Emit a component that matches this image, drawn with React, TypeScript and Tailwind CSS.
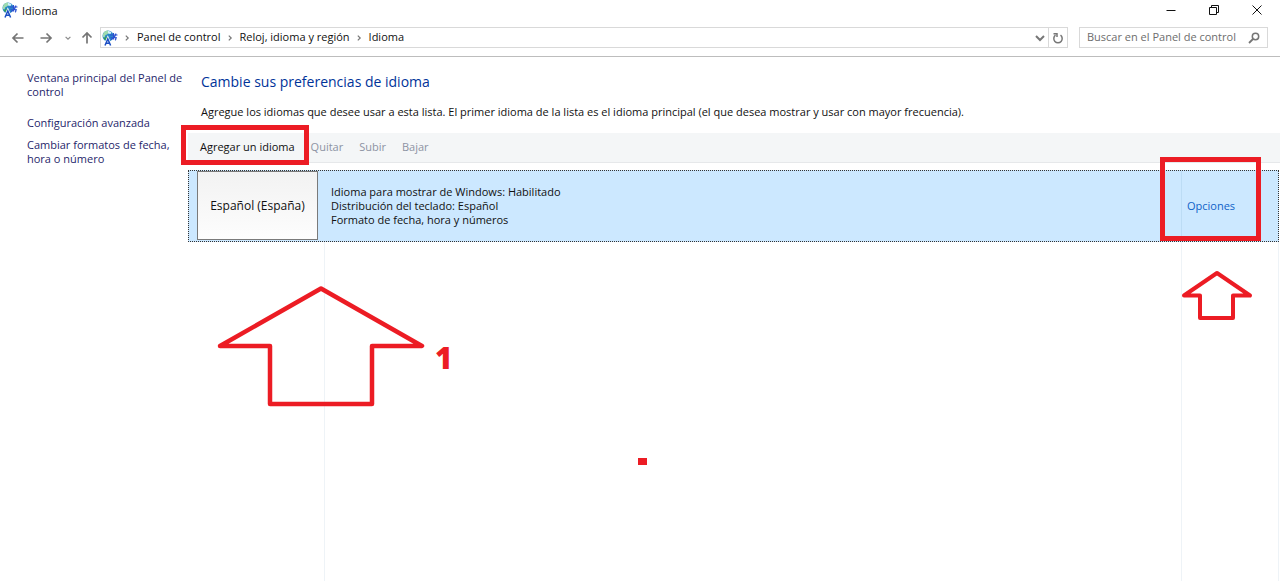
import type { ReactNode } from 'react'

const crumbs = ['Panel de control', 'Reloj, idioma y región', 'Idioma']

const details = [
  'Idioma para mostrar de Windows: Habilitado',
  'Distribución del teclado: Español',
  'Formato de fecha, hora y números',
]

function LanguageIcon() {
  return (
    <svg className="h-4 w-4 shrink-0" viewBox="0 0 16 16" fill="none">
      <circle cx="6" cy="6" r="5.5" fill="#2a86c8" />
      <path d="M.8 5C1.500 2 3.500.6 6 .6L7 2.500 5 4.500 3.500 5 2.500 7.500 1 7Z" fill="#9fdcb0" />
      <path d="M6 .8 9.500 2 8.500 4 6 3.500Z" fill="#d5f2fa" />
      <path d="M1.500 8.500 4.500 6.500 5.500 8.500 3.500 10Z" fill="#2f9e58" />
      <path d="M3 15.500 5.800 9 8.600 15.500" stroke="#fff" strokeWidth="3" />
      <path d="M3 15.500 5.800 9 8.600 15.500M4 13.300H7.600" stroke="#1c4fc4" strokeWidth="1.500" />
      <path
        d="M8 5H15.500M8.500 7.800H15M11.500 3V9.500M14 3.500C13 7 11 9 9 9.500M12.500 7C14 8 14.500 9 13 10.200"
        stroke="#2a50d0"
        strokeWidth="1.100"
      />
    </svg>
  )
}

function Chevron({ className }: { className: string }) {
  return (
    <svg className={className} viewBox="0 0 10 10" fill="none">
      <path d="M1 3 5 7 9 3" stroke="currentColor" strokeWidth="2" />
    </svg>
  )
}

interface INavButton {
  label: string
  className: string
  children: ReactNode
}

function NavButton({ label, className, children }: INavButton) {
  return (
    <button aria-label={label} className={`flex items-center justify-center ${className}`}>
      {children}
    </button>
  )
}

function Arrow({ className }: { className: string }) {
  return (
    <svg className={className} viewBox="0 0 14 12" fill="none">
      <path d="M12.500 6H2M6.500 1.500 2 6 6.500 10.500" stroke="#757575" strokeWidth="1.700" />
    </svg>
  )
}

function TitleBar() {
  return (
    <div className="flex h-6 items-start pt-0.5 pr-0.5 pl-0.5">
      <LanguageIcon />
      <h1 className="ml-1 flex-1 text-[11px] leading-[18px]">Idioma</h1>
      <NavButton label="Minimizar" className="h-4 w-[43px]">
        <svg className="h-3 w-3" viewBox="0 0 12 12">
          <path d="M1.500 6.500H10.500" stroke="#111" />
        </svg>
      </NavButton>
      <NavButton label="Restaurar" className="h-4 w-[43px]">
        <svg className="h-3 w-3" viewBox="0 0 12 12" fill="none" stroke="#111">
          <path d="M1.500 3.500H8.500V10.500H1.500ZM3.500 3.500V1.500H10.500V8.500H8.500" />
        </svg>
      </NavButton>
      <NavButton label="Cerrar" className="h-4 w-[43px]">
        <svg className="h-3 w-3" viewBox="0 0 12 12" fill="none" stroke="#111">
          <path d="M1.500 1.500 10.500 10.500M10.500 1.500 1.500 10.500" />
        </svg>
      </NavButton>
    </div>
  )
}

function AddressBar() {
  return (
    <div className="flex items-center border-b border-[#bdbdbd] pt-[3px] pr-3 pb-2 pl-2">
      <NavButton label="Atrás" className="h-5 w-5">
        <Arrow className="h-3 w-3.5" />
      </NavButton>
      <NavButton label="Adelante" className="ml-2 h-5 w-5">
        <Arrow className="h-3 w-3.5 rotate-180" />
      </NavButton>
      <NavButton label="Ubicaciones recientes" className="ml-1 h-5 w-4 text-[#8a8a8a]">
        <Chevron className="h-1.5 w-1.5" />
      </NavButton>
      <NavButton label="Subir un nivel" className="mr-1 ml-0.5 h-5 w-[18px]">
        <Arrow className="h-3 w-3.5 rotate-90" />
      </NavButton>
      <nav className="flex h-[21px] flex-1 items-center border border-[#d9d9d9] pl-px">
        <LanguageIcon />
        {crumbs.map((crumb) => (
          <div key={crumb} className="flex items-center">
            <Chevron className="mr-[7px] ml-1.5 h-1.5 w-1.5 -rotate-90 text-[#777]" />
            <a href="#" className="text-[11px]">
              {crumb}
            </a>
          </div>
        ))}
        <NavButton label="Ubicaciones anteriores" className="ml-auto h-full w-4 text-[#777]">
          <Chevron className="h-2.5 w-2.5" />
        </NavButton>
        <NavButton label="Actualizar" className="h-full w-[19px] border-l border-[#d9d9d9]">
          <svg className="h-3 w-3" viewBox="0 0 12 12" fill="none" stroke="#777" strokeWidth="1.500">
            <path d="M3.500 3.200A4.200 4.200 0 1 0 8.500 3.200M1.500 1.700H5V5" />
          </svg>
        </NavButton>
      </nav>
      <label className="ml-[11px] flex h-[21px] w-[189px] items-center border border-[#d9d9d9] px-[7px]">
        <input
          aria-label="Buscar en el Panel de control"
          placeholder="Buscar en el Panel de control"
          className="min-w-0 flex-1 text-[11px] outline-none placeholder:text-[#6d6d6d]"
        />
        <svg className="h-3 w-3" viewBox="0 0 12 12" fill="none" stroke="#757575">
          <circle cx="7.500" cy="4.500" r="3.200" strokeWidth="1.500" />
          <path d="M5 7 1 11" strokeWidth="1.800" />
        </svg>
      </label>
    </div>
  )
}

function Sidebar() {
  return (
    <aside className="flex w-[188px] shrink-0 flex-col gap-2 pt-[14px] pl-[27px] text-[11px] leading-[14px] text-[#1f1f6b]">
      <a href="#" className="mb-[9px]">
        Ventana principal del Panel de control
      </a>
      <a href="#">Configuración avanzada</a>
      <a href="#">Cambiar formatos de fecha, hora o número</a>
    </aside>
  )
}

function Toolbar() {
  return (
    <div className="mt-3 flex h-[30px] items-center gap-4 border-b border-[#e6e8ea] bg-[#f4f6f7] pl-3 text-[11px]">
      <div className="relative">
        <button>Agregar un idioma</button>
        <span className="absolute -top-[14px] -right-[14px] -bottom-[9px] -left-[19px] border-[5px] border-[#ec1c24]" />
      </div>
      <button disabled className="text-[#8d93a3]">
        Quitar
      </button>
      <button disabled className="text-[#8d93a3]">
        Subir
      </button>
      <button disabled className="text-[#8d93a3]">
        Bajar
      </button>
    </div>
  )
}

function LanguageRow() {
  return (
    <div className="flex h-[72px] border border-dotted border-[#333] bg-[#cce8ff]">
      <div className="w-[135px] pl-2">
        <button className="h-[69px] w-[121px] border border-[#7a7a7a] bg-linear-to-b from-[#f2f2f2] to-[#fdfdfd] text-[12px] whitespace-nowrap">
          Español (España)
        </button>
      </div>
      <ul className="flex-1 self-center border-l border-transparent pl-1.5 text-[11px] leading-[14px]">
        {details.map((line) => (
          <li key={line}>{line}</li>
        ))}
      </ul>
      <div className="relative flex w-[97px] items-center border-l border-[#bcdcf5] pl-[5px]">
        <a href="#" className="text-[11px] text-[#0f62c8]">
          Opciones
        </a>
        <span className="absolute -top-[14px] right-[17px] bottom-0 -left-[22px] border-[5px] border-[#ec1c24]" />
      </div>
    </div>
  )
}

function EmptyList() {
  return (
    <div className="relative flex flex-1">
      <div className="w-[136px]" />
      <div className="flex-1 border-l border-[#eef3f7]" />
      <div className="w-[98px] border-x border-[#eef3f7]" />

      <svg
        className="absolute top-[42px] left-[28px] h-[124px] w-[210px]"
        viewBox="0 0 210 124"
        fill="none"
      >
        <path
          d="M105 4.500 206 62H156V120H54V62H4Z"
          stroke="#ec1c24"
          strokeWidth="4.500"
          strokeLinejoin="round"
        />
      </svg>
      <span className="absolute top-[100px] left-[247px] text-[30px] leading-8 font-extrabold text-[#ec1c24]">
        1
      </span>
      <span className="absolute top-[216px] left-[450px] h-[7px] w-[9px] bg-[#ec1c24]" />
      <svg
        className="absolute top-[27px] right-[26px] h-[52px] w-[72px]"
        viewBox="0 0 72 52"
        fill="none"
      >
        <path
          d="M36 4 69 26.500H52V49H19V26.500H3Z"
          stroke="#ec1c24"
          strokeWidth="4"
          strokeLinejoin="round"
        />
      </svg>
    </div>
  )
}

export default function App() {
  return (
    <div className="flex min-h-screen flex-col bg-white font-['Open_Sans','Noto_Sans',sans-serif] text-[#111]">
      <header>
        <TitleBar />
        <AddressBar />
      </header>
      <div className="flex flex-1">
        <Sidebar />
        <main className="flex min-w-0 flex-1 flex-col pt-3">
          <h2 className="pl-[13px] text-[14px] leading-[26px] text-[#003399]">
            Cambie sus preferencias de idioma
          </h2>
          <p className="mt-2 pl-[13px] text-[11px] leading-[18px]">
            Agregue los idiomas que desee usar a esta lista. El primer idioma de la lista es el
            idioma principal (el que desea mostrar y usar con mayor frecuencia).
          </p>
          <Toolbar />
          <div className="mt-[7px] flex flex-1 flex-col pr-px">
            <LanguageRow />
            <EmptyList />
          </div>
        </main>
      </div>
    </div>
  )
}
